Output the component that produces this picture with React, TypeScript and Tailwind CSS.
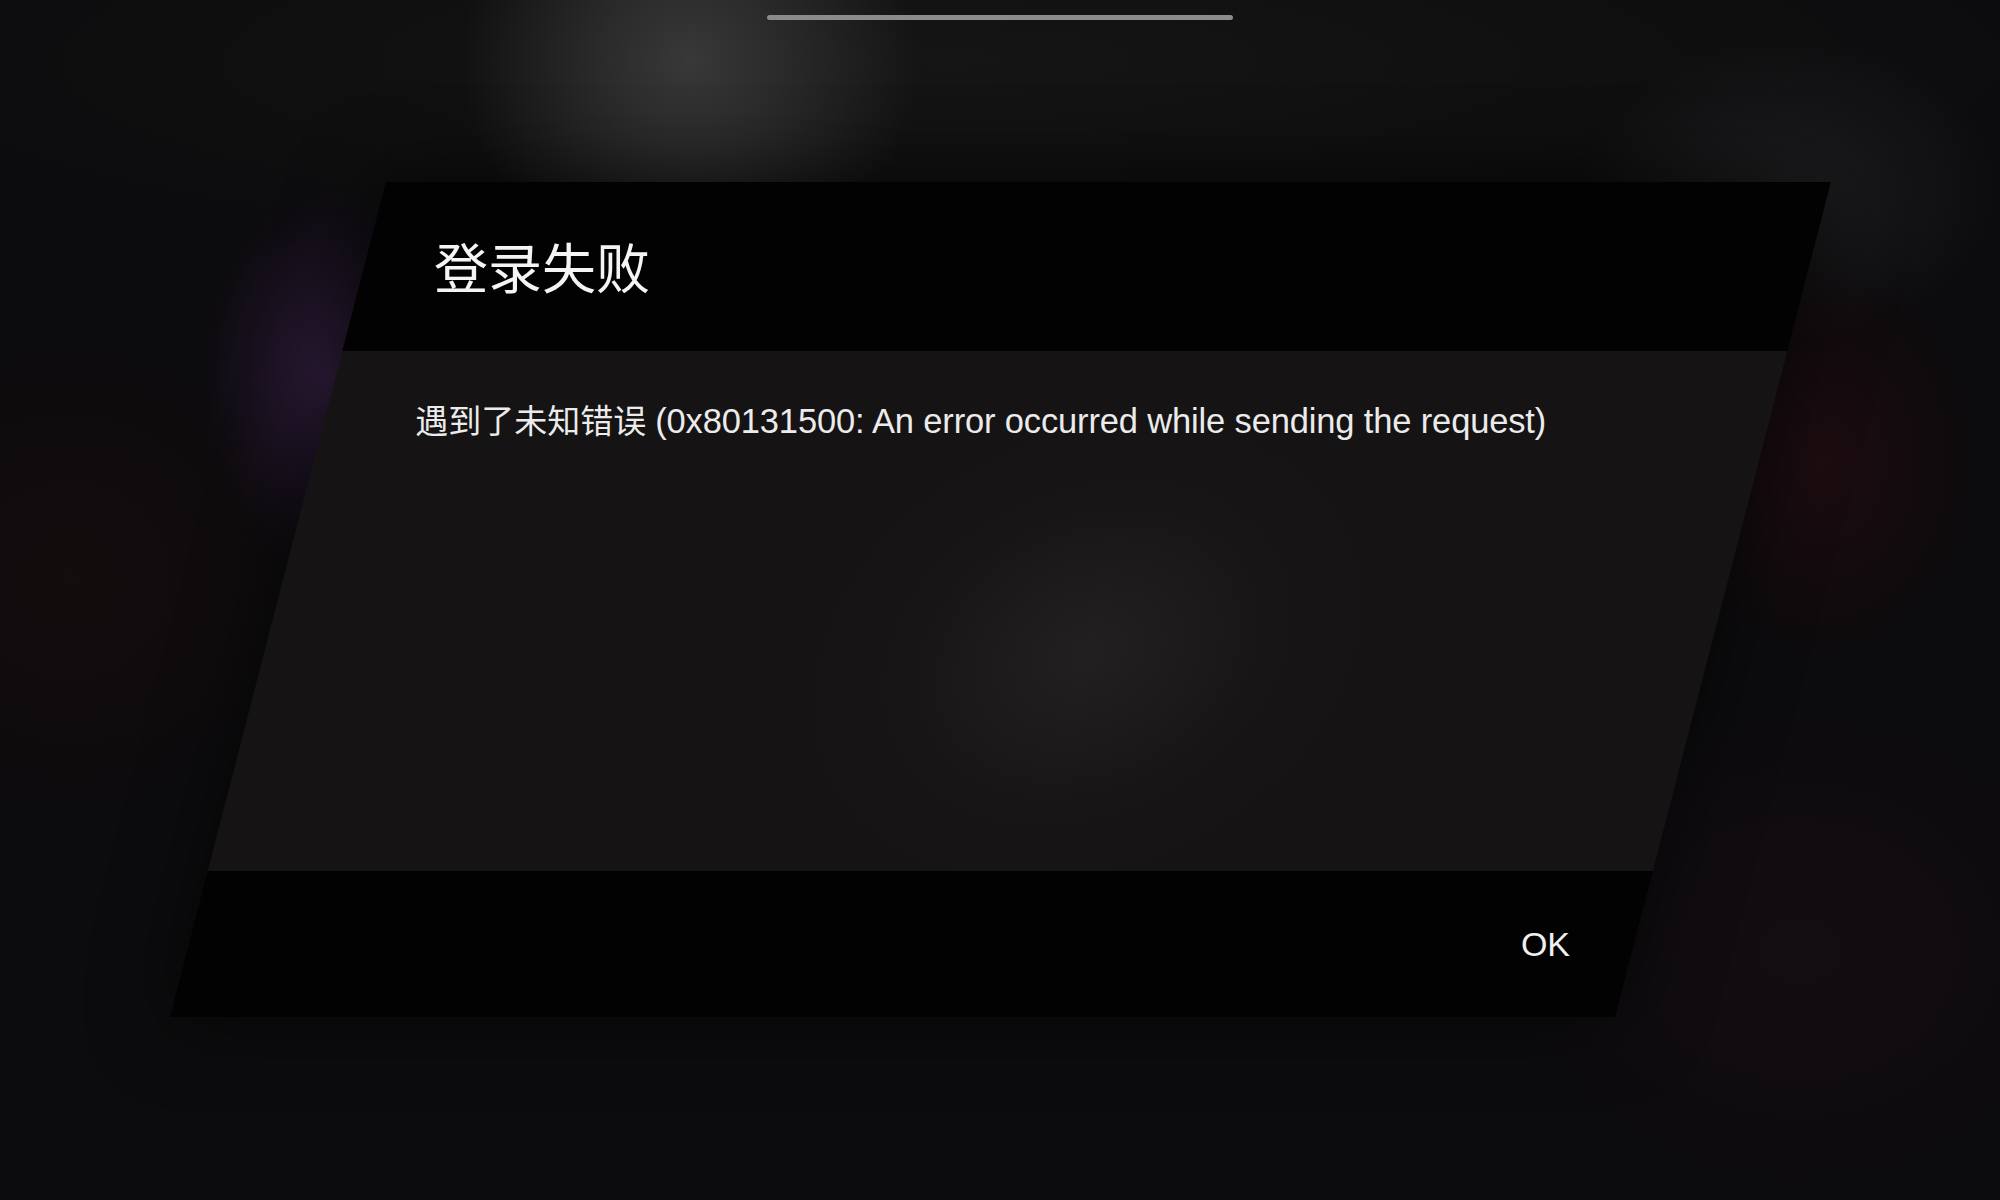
import React from "react";

export default function App() {
  return (
    <div className="relative w-[2000px] h-[1200px] overflow-hidden bg-[#0c0b0d] font-['Liberation_Sans',sans-serif]">
      {/* ambient background glows */}
      <div className="pointer-events-none absolute left-[-200px] top-[-150px] w-[2300px] h-[420px] bg-[radial-gradient(closest-side,#151515_0%,transparent_100%)]" />
      <div className="pointer-events-none absolute left-[460px] top-[-160px] w-[460px] h-[440px] rounded-full bg-[radial-gradient(closest-side,#383838_0%,#2a2a2a_40%,transparent_100%)]" />
      <div className="pointer-events-none absolute left-[1580px] top-[40px] w-[420px] h-[300px] rounded-full bg-[radial-gradient(closest-side,#1d1d1f_0%,transparent_100%)]" />
      <div className="pointer-events-none absolute left-[200px] top-[190px] w-[260px] h-[380px] rounded-full bg-[radial-gradient(closest-side,#2e1d3a_0%,#1b1222_50%,transparent_100%)]" />
      <div className="pointer-events-none absolute left-[-180px] top-[330px] w-[500px] h-[500px] rounded-full bg-[radial-gradient(closest-side,#140d0e_0%,transparent_100%)]" />
      <div className="pointer-events-none absolute left-[1660px] top-[260px] w-[320px] h-[400px] rounded-full bg-[radial-gradient(closest-side,#1d0c10_0%,transparent_100%)]" />
      <div className="pointer-events-none absolute left-[1500px] top-[700px] w-[600px] h-[500px] rounded-full bg-[radial-gradient(closest-side,#140d12_0%,transparent_100%)]" />

      <div className="relative flex flex-col items-center">
        {/* top handle bar */}
        <div className="mt-[15px] w-[466px] h-[5px] rounded-full bg-[#8b8b8b]" />

        {/* skewed dialog */}
        <div className="mt-[162px] w-[1445px] h-[835px] flex flex-col skew-x-[-14.5deg] shadow-[0_0_80px_rgba(0,0,0,0.55)]">
          <div className="h-[169px] shrink-0 bg-[#030203] flex items-center pl-[70px]">
            <div className="skew-x-[14.5deg] text-[54px] leading-none text-[#f4f4f4] font-['Noto_Sans_CJK_SC',sans-serif] pb-[2px]">
              登录失败
            </div>
          </div>

          <div className="h-[520px] shrink-0 bg-[radial-gradient(ellipse_300px_260px_at_57%_58%,#222020_0%,#171515_60%,#151313_100%)] pl-[91px] pt-[52px]">
            <div className="skew-x-[14.5deg] w-fit flex items-baseline whitespace-nowrap leading-none text-[#ebebeb]">
              <span className="text-[33px] font-['Noto_Sans_CJK_SC',sans-serif]">遇到了未知错误</span>
              <span className="ml-[9px] text-[34.5px] tracking-[-0.15px]">
                (0x80131500: An error occurred while sending the request)
              </span>
            </div>
          </div>

          <div className="h-[146px] shrink-0 bg-[#020202] flex items-center justify-end pr-[64px]">
            <div className="skew-x-[14.5deg] text-[34px] leading-none text-[#f0f0f0]">OK</div>
          </div>
        </div>
      </div>
    </div>
  );
}
